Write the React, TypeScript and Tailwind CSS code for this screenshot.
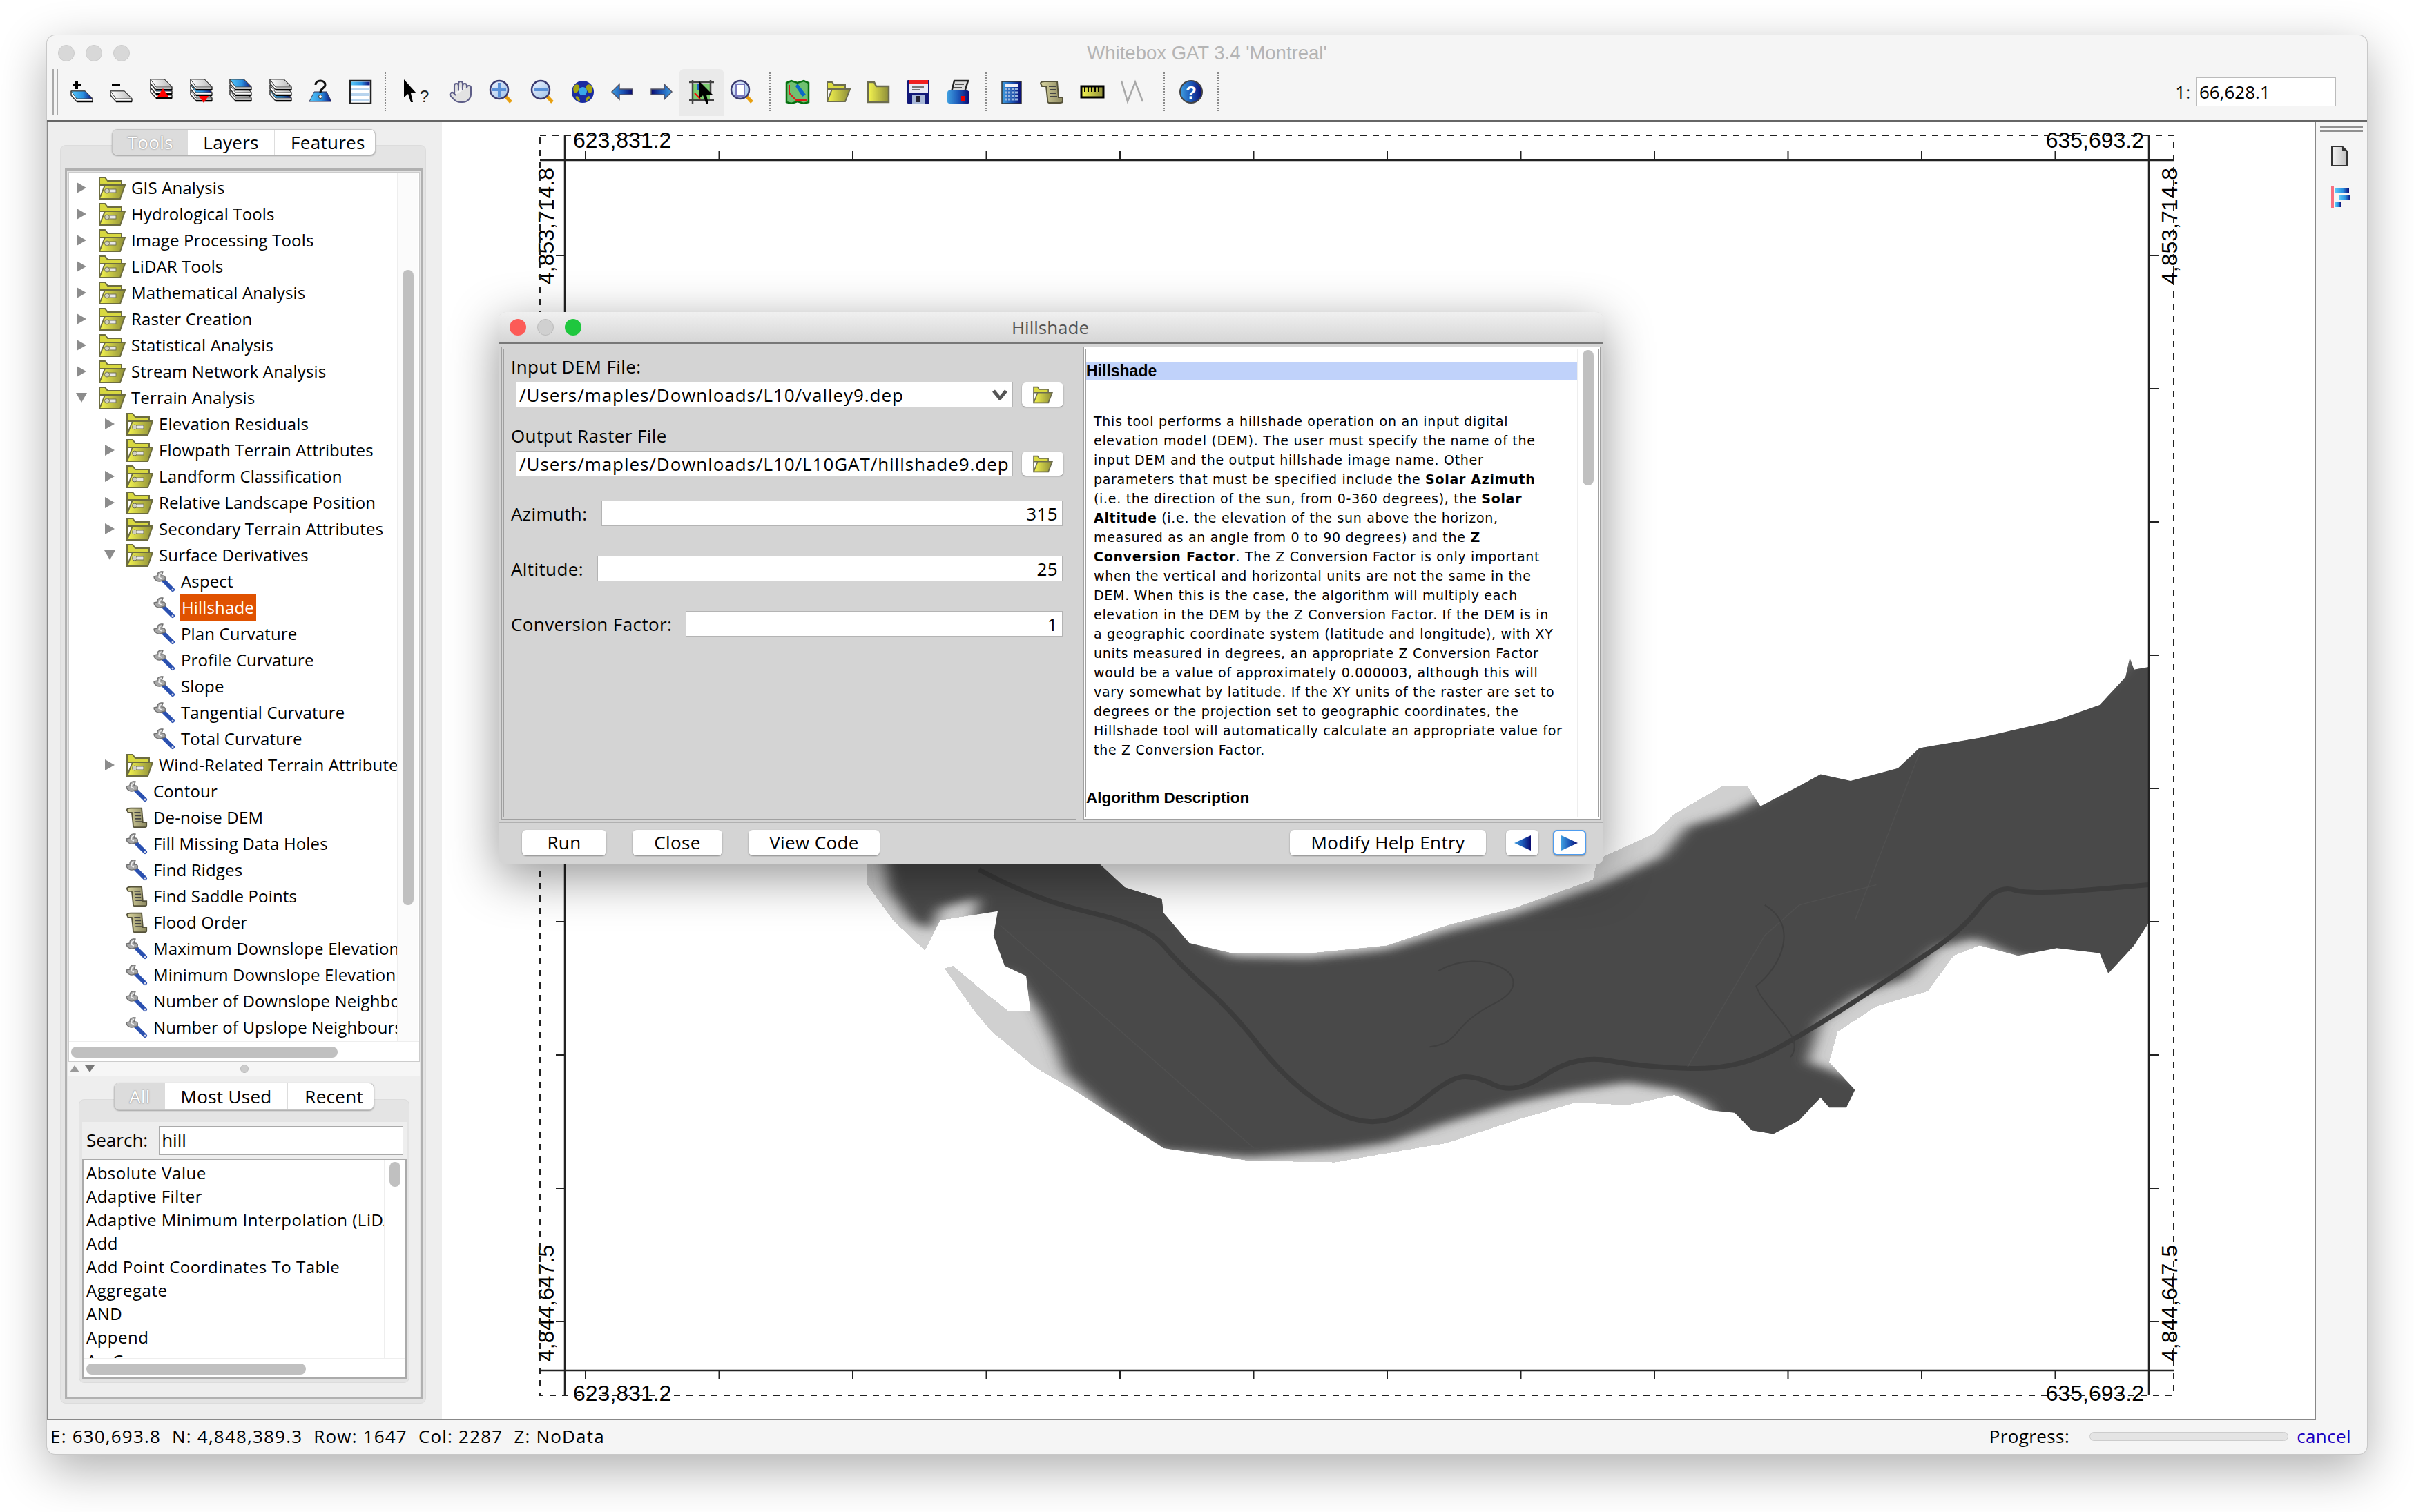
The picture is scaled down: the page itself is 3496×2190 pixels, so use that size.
import React from "react";
import { Hand } from "lucide-react";

const Defs = () => (
  <svg className="absolute w-0 h-0">
    <defs>
      <linearGradient id="gb"><stop offset="0" stopColor="#58c8f8" /><stop offset="0.55" stopColor="#2a90e0" /><stop offset="1" stopColor="#0c0c78" /></linearGradient>
      <linearGradient id="gy"><stop offset="0" stopColor="#f6f650" /><stop offset="1" stopColor="#8c8c38" /></linearGradient>
      <linearGradient id="gw"><stop offset="0" stopColor="#ffffff" /><stop offset="1" stopColor="#b8b8b8" /></linearGradient>
      <linearGradient id="gal"><stop offset="0" stopColor="#3f9fe0" /><stop offset="0.5" stopColor="#1c58b8" /><stop offset="1" stopColor="#0a0a70" /></linearGradient>
      <linearGradient id="gar"><stop offset="0" stopColor="#0a0a70" /><stop offset="0.5" stopColor="#1c58b8" /><stop offset="1" stopColor="#3f9fe0" /></linearGradient>
      <linearGradient id="gg" x1="0" y1="0" x2="1" y2="1"><stop offset="0" stopColor="#f0f4ff" /><stop offset="1" stopColor="#9cc0e8" /></linearGradient>
      <linearGradient id="gh"><stop offset="0" stopColor="#f4f4f4" /><stop offset="1" stopColor="#c0c0c0" /></linearGradient>
      <linearGradient id="gs"><stop offset="0" stopColor="#d8d4a0" /><stop offset="1" stopColor="#8c8860" /></linearGradient>
      <filter id="bl" x="-10%" y="-10%" width="120%" height="120%"><feGaussianBlur stdDeviation="9" /></filter>
    </defs>
  </svg>
);

const I = ({ children, w = 36, h = 36 }: { children: React.ReactNode; w?: number; h?: number }) => (
  <svg width={w} height={h} viewBox={`0 0 ${w} ${h}`} className="block shrink-0">{children}</svg>
);

const Layer = ({ y, x = 2, fill }: { y: number; x?: number; fill: string }) => (
  <g transform={`translate(${x} ${y})`}>
    <path d="M0 0H20L31 11V15H8L0 6Z" fill="#fff" stroke="#333" strokeWidth="1.5" strokeLinejoin="round" />
    <path d="M0 0H20L31 11H8Z" fill={fill} stroke="#444" strokeWidth="1" />
    <path d="M8 15H31" stroke="#000" strokeWidth="2.5" />
  </g>
);

const AddLayer = () => (<I><path d="M4 8H16M10 2V14" stroke="#000" strokeWidth="4" /><Layer y={17} fill="url(#gb)" /></I>);
const RemoveLayer = () => (<I><path d="M4 8H16" stroke="#000" strokeWidth="4" /><Layer y={17} fill="url(#gw)" /></I>);
const Raise = () => (<I><Layer y={12} x={2} fill="url(#gw)" /><Layer y={6} x={2} fill="url(#gb)" /><Layer y={0} x={2} fill="url(#gw)" /><path d="M12 25L20 13L28 25Z" fill="#f00" /></I>);
const Lower = () => (<I><Layer y={16} x={2} fill="url(#gw)" /><Layer y={8} x={2} fill="url(#gb)" /><Layer y={0} x={2} fill="url(#gw)" /><path d="M14 24H28L21 34Z" fill="#f00" /></I>);
const StackTop = () => (<I><Layer y={16} fill="url(#gw)" /><Layer y={8} fill="url(#gw)" /><Layer y={0} fill="url(#gb)" /></I>);
const StackBot = () => (<I><Layer y={16} fill="url(#gb)" /><Layer y={8} fill="url(#gw)" /><Layer y={0} fill="url(#gw)" /></I>);
const HookQ = () => (
  <I>
    <path d="M9 18H27L34 32H2Z" fill="url(#gb)" stroke="#335" strokeWidth="1" />
    <path d="M11 8C11 0 25 0 25 8C25 13 18 12 18 19" fill="none" stroke="#111" strokeWidth="3" />
    <circle cx="18" cy="25" r="2.5" fill="#fff" stroke="#333" />
  </I>
);
const TableI = () => (
  <I h={36}>
    <rect x="3" y="2" width="30" height="33" fill="#fff" stroke="#222" strokeWidth="2.5" />
    <rect x="4.5" y="3.5" width="27" height="5" fill="url(#gb)" />
    <rect x="4.5" y="12" width="27" height="4" fill="#b8d4ee" />
    <rect x="4.5" y="20" width="27" height="4" fill="#b8d4ee" />
    <rect x="4.5" y="28" width="27" height="4" fill="#b8d4ee" />
  </I>
);
const CursorQ = () => (
  <I w={40}>
    <path d="M2 0V26L8 21L12 33H15L12 20H20Z" fill="#000" />
    <text x="25" y="33" fontFamily="Liberation Sans" fontSize="24" fill="#222">?</text>
  </I>
);
const HandI = () => <Hand size={36} strokeWidth={1.4} color="#5e5e88" fill="#e2e2e2" className="block" />;
const Mag = ({ kind }: { kind: "+" | "-" | "o" }) => (
  <I>
    <path d="M24 24L32 33" stroke="#e8a010" strokeWidth="5" />
    <circle cx="15" cy="15" r="13" fill="url(#gg)" stroke="#3a3a70" strokeWidth="2.5" />
    {kind !== "o" && <path d="M5 15H25" stroke="#5a90d8" strokeWidth="4" />}
    {kind === "+" && <path d="M15 5V25" stroke="#5a90d8" strokeWidth="4" />}
    {kind === "o" && <rect x="9" y="7" width="12" height="17" fill="#fff" stroke="#7a7ac0" strokeWidth="2" />}
  </I>
);
const Globe = () => (
  <I>
    <circle cx="18" cy="18" r="16" fill="#1a2ca0" />
    <path d="M5 10C8 6 12 7 13 10C14 14 11 18 8 20C5 20 3 15 5 10Z" fill="#a4a410" />
    <path d="M31 10C28 6 24 7 23 10C22 14 25 18 28 20C31 20 33 15 31 10Z" fill="#a4a410" />
    <path d="M10 24C13 26 14 29 14 32C11 31 8 28 7 25Z" fill="#a4a410" />
    <path d="M26 24C23 26 22 29 22 32C25 31 28 28 29 25Z" fill="#a4a410" />
    <circle cx="18" cy="17" r="6" fill="#38a8e8" />
  </I>
);
const ArrowL = () => (<I><path d="M2 18L13 7V14H32V22H13V29Z" fill="url(#gal)" stroke="#556" strokeWidth="1.5" /></I>);
const ArrowR = () => (<I><path d="M34 18L23 7V14H4V22H23V29Z" fill="url(#gar)" stroke="#556" strokeWidth="1.5" /></I>);
const SelectI = () => (
  <I>
    <rect x="6" y="6" width="24" height="26" fill="#7ccc70" />
    <path d="M8 20L16 28" stroke="#f00" strokeWidth="2" />
    <rect x="11" y="6" width="6" height="10" fill="#1c60c0" />
    <path d="M5 1V35M0 4H36M0 30H36M31 1V20" stroke="#444" strokeWidth="2.5" fill="none" />
    <path d="M14 2V28L20 23L25 36H28L25 22H34Z" fill="#000" />
  </I>
);
const MapI = () => (
  <I>
    <path d="M2 5L9 2L18 5L27 2L34 5V33L27 35L18 32L9 35L2 33Z" fill="#70c070" stroke="#067010" strokeWidth="2.5" />
    <path d="M18 6L30 22L25 25L15 10Z" fill="#0a68c8" />
    <path d="M6 8V20L16 30H32" fill="none" stroke="#e01818" strokeWidth="2" />
  </I>
);
const FolderOpen = ({ w = 36, h = 32 }: { w?: number; h?: number }) => (
  <svg width={w} height={h} viewBox="0 0 36 32" className="block shrink-0">
    <path d="M2 2H9L12 6H28V12H2Z" fill="#dada40" stroke="#6c6c50" strokeWidth="2" />
    <path d="M2 12V30H28L35 12H9L2 30" fill="url(#gy)" stroke="#6c6c50" strokeWidth="2" />
  </svg>
);
const TreeFolder = () => (
  <svg width="40" height="36" viewBox="0 0 40 36" className="block shrink-0">
    <path d="M2 3H10L14 8H34V14H2Z" fill="#d8d840" stroke="#6c6c40" strokeWidth="2" />
    <path d="M2 14V34H32L39 14H10L2 34" fill="url(#gy)" stroke="#6c6c40" strokeWidth="2" />
    <rect x="12" y="20" width="14" height="5" fill="#e8e8e8" stroke="#707050" />
    <circle cx="13" cy="22.5" r="3.5" fill="#d0d0c0" stroke="#707050" />
  </svg>
);
const FolderI = () => (
  <I>
    <path d="M3 4H12L15 10H33V33H3Z" fill="url(#gy)" stroke="#6c6c50" strokeWidth="2.5" />
  </I>
);
const Save = () => (
  <I>
    <rect x="2" y="1" width="32" height="34" fill="#101878" rx="1" />
    <rect x="5" y="1" width="27" height="6" fill="#f02020" />
    <rect x="5" y="7" width="27" height="12" fill="#e8eaf4" />
    <path d="M9 11H26M9 15H20" stroke="#777" strokeWidth="2" />
    <rect x="9" y="22" width="19" height="13" fill="#a8b8d8" />
    <rect x="14" y="24" width="6" height="9" fill="#223" />
  </I>
);
const PrintI = () => (
  <I>
    <path d="M12 2H32L27 18H8Z" fill="#ddd" stroke="#222" strokeWidth="2.5" />
    <path d="M13 7H26M11 12H23" stroke="#555" strokeWidth="2" />
    <path d="M2 20C2 15 5 16 8 16H30C33 16 34 18 34 22V33C34 35 32 35 30 35H6C3 35 2 34 2 32Z" fill="url(#gal)" />
    <rect x="22" y="24" width="6" height="7" fill="#e80000" />
  </I>
);
const Calc = () => (
  <I>
    <rect x="4" y="3" width="28" height="32" fill="url(#gal)" stroke="#333" strokeWidth="1.5" />
    <rect x="8" y="6" width="20" height="5" fill="#f0f0f8" />
    <path d="M8 14H28M8 19H28M8 24H28M8 29H28" stroke="#9cb8e0" strokeWidth="3" />
    <path d="M12 13V31M17 13V31M22 13V31" stroke="#3468b8" strokeWidth="2" />
  </I>
);
const ScrollI = ({ s = 36 }: { s?: number }) => (
  <svg width={s} height={s} viewBox="0 0 36 36" className="block shrink-0">
    <path d="M2 6C2 3 6 3 8 3H26L28 26H34V32C34 34 32 34 30 34H14C12 34 12 30 12 28L10 10H4Z" fill="url(#gs)" stroke="#55523a" strokeWidth="2" />
    <path d="M14 10H24M15 15H25M15 20H25M16 25H26" stroke="#444" strokeWidth="2" />
  </svg>
);
const Ruler = () => (
  <I>
    <rect x="2" y="10" width="32" height="16" fill="url(#gy)" stroke="#000" strokeWidth="3" />
    <path d="M7 11V18M12 11V18M17 11V18M22 11V18M27 11V18" stroke="#000" strokeWidth="2" />
  </I>
);
const Zig = () => (
  <I w={40}><path d="M3 2L12 32L23 4L34 32" fill="none" stroke="#a8a8a8" strokeWidth="2.5" /></I>
);
const HelpI = () => (
  <I>
    <circle cx="18" cy="18" r="16" fill="url(#gal)" stroke="#444" strokeWidth="2" />
    <text x="18" y="28" fontFamily="Liberation Sans" fontWeight="700" fontSize="26" fill="#fff" textAnchor="middle">?</text>
  </I>
);
const Wrench = () => (
  <svg width="32" height="32" viewBox="0 0 32 32" className="block shrink-0">
    <path d="M15 15L28 28" stroke="#2a50b0" strokeWidth="6" strokeLinecap="round" />
    <circle cx="28" cy="28" r="1.5" fill="#dde" />
    <path d="M13 2C8 1 5 5 6 8L1 9C1 14 7 18 13 15L17 14C18 10 17 8 14 8L12 8L14 2Z" fill="#a8a8a8" stroke="#707070" strokeWidth="1.4" strokeLinejoin="round" />
    <path d="M12 4L9 6L8 10L12 12" fill="none" stroke="#eee" strokeWidth="1.5" />
  </svg>
);
const Tri = ({ open }: { open?: boolean }) => (
  <svg width="16" height="18" viewBox="0 0 16 18" className="block shrink-0">
    {open ? <path d="M0 2H16L8 16Z" fill="#8c8c8c" /> : <path d="M1 1L15 9L1 17Z" fill="#8c8c8c" />}
  </svg>
);
const DocI = () => (
  <svg width="24" height="30" viewBox="0 0 24 30" className="block">
    <path d="M1 1H16L23 8V29H1Z" fill="url(#gh)" stroke="#333" strokeWidth="2" />
    <path d="M16 1V8H23Z" fill="#333" />
  </svg>
);
const ChartI = () => (
  <svg width="30" height="32" viewBox="0 0 30 32" className="block">
    <rect x="0" y="0" width="4" height="32" fill="#f87080" />
    <rect x="6" y="3" width="20" height="7" fill="url(#gb)" />
    <rect x="12" y="13" width="16" height="7" fill="url(#gb)" />
    <rect x="6" y="24" width="8" height="7" fill="url(#gb)" />
  </svg>
);

const Sep = ({ ml }: { ml: string }) => <div className={`h-[56px] w-[2px] border-l-2 border-dotted border-[#8a8a8a] ${ml}`} />;
const TB = ({ w, children, sel }: { w: string; children: React.ReactNode; sel?: boolean }) => (
  <div className={`relative flex items-center justify-center shrink-0 h-[36px] ${w}`}>
    {sel && <div className="absolute left-[7.5px] right-[7.5px] -top-[15px] -bottom-[17px] rounded-t-[6px] bg-[#eaeaea]" />}
    <div className="relative">{children}</div>
  </div>
);

type Kind = "f0" | "f0o" | "f1" | "f1o" | "l1" | "l2" | "s1";
const rows: [string, Kind, boolean?][] = [
  ["GIS Analysis", "f0"], ["Hydrological Tools", "f0"], ["Image Processing Tools", "f0"], ["LiDAR Tools", "f0"],
  ["Mathematical Analysis", "f0"], ["Raster Creation", "f0"], ["Statistical Analysis", "f0"], ["Stream Network Analysis", "f0"],
  ["Terrain Analysis", "f0o"], ["Elevation Residuals", "f1"], ["Flowpath Terrain Attributes", "f1"], ["Landform Classification", "f1"],
  ["Relative Landscape Position", "f1"], ["Secondary Terrain Attributes", "f1"], ["Surface Derivatives", "f1o"],
  ["Aspect", "l2"], ["Hillshade", "l2", true], ["Plan Curvature", "l2"], ["Profile Curvature", "l2"], ["Slope", "l2"],
  ["Tangential Curvature", "l2"], ["Total Curvature", "l2"], ["Wind-Related Terrain Attributes", "f1"], ["Contour", "l1"],
  ["De-noise DEM", "s1"], ["Fill Missing Data Holes", "l1"], ["Find Ridges", "l1"], ["Find Saddle Points", "s1"], ["Flood Order", "s1"],
  ["Maximum Downslope Elevation Change", "l1"], ["Minimum Downslope Elevation Change", "l1"],
  ["Number of Downslope Neighbours", "l1"], ["Number of Upslope Neighbours", "l1"],
];

const Row = ({ label, kind, sel }: { label: string; kind: Kind; sel?: boolean }) => {
  const folder = kind[0] === "f";
  const lead = kind.startsWith("f0") ? "pl-[10px]" : kind.startsWith("f1") ? "pl-[51px]" : kind === "l2" ? "pl-[122px]" : "pl-[82px]";
  const arrowGap = kind.startsWith("f0") ? "mr-[16px]" : "mr-[15px]";
  return (
    <div className={`flex h-[38px] items-center whitespace-nowrap tracking-[0.15px] ${lead}`}>
      {folder && <div className={arrowGap}><Tri open={kind.endsWith("o")} /></div>}
      {folder ? <TreeFolder /> : kind === "s1" ? <ScrollI s={32} /> : <Wrench />}
      {sel ? (
        <span className="ml-[6px] flex h-[38px] items-center bg-[#e05200] px-[3px] text-white">{label}</span>
      ) : (
        <span className="ml-[8px]">{label}</span>
      )}
    </div>
  );
};

const Tabs = ({ items, widths, cls }: { items: string[]; widths: string[]; cls: string }) => (
  <div className={`relative z-10 flex rounded-[8px] border border-[#c4c4c4] bg-white text-[26px] tracking-[0.3px] shadow-[0_1px_2px_rgba(0,0,0,0.3)] overflow-hidden ${cls}`}>
    {items.map((t, i) => (
      <div key={t} className={`flex items-center justify-center ${widths[i]} ${i === 0 ? "bg-[#dcdcdc] text-white [text-shadow:0_0_2px_#777]" : "text-black"} ${i === 2 ? "border-l border-[#ddd] pl-[9px]" : ""}`}>{t}</div>
    ))}
  </div>
);

const listItems = ["Absolute Value", "Adaptive Filter", "Adaptive Minimum Interpolation (LiDAR)", "Add", "Add Point Coordinates To Table", "Aggregate", "AND", "Append", "ArcCos"];

const B = ({ children }: { children: React.ReactNode }) => <b className="font-bold">{children}</b>;
const help: React.ReactNode[] = [
  "This tool performs a hillshade operation on an input digital",
  "elevation model (DEM). The user must specify the name of the",
  "input DEM and the output hillshade image name. Other",
  <>parameters that must be specified include the <B>Solar Azimuth</B></>,
  <>(i.e. the direction of the sun, from 0-360 degrees), the <B>Solar</B></>,
  <><B>Altitude</B> (i.e. the elevation of the sun above the horizon,</>,
  <>measured as an angle from 0 to 90 degrees) and the <B>Z</B></>,
  <><B>Conversion Factor</B>. The Z Conversion Factor is only important</>,
  "when the vertical and horizontal units are not the same in the",
  "DEM. When this is the case, the algorithm will multiply each",
  "elevation in the DEM by the Z Conversion Factor. If the DEM is in",
  "a geographic coordinate system (latitude and longitude), with XY",
  "units measured in degrees, an appropriate Z Conversion Factor",
  "would be a value of approximately 0.000003, although this will",
  "vary somewhat by latitude. If the XY units of the raster are set to",
  "degrees or the projection set to geographic coordinates, the",
  "Hillshade tool will automatically calculate an appropriate value for",
  "the Z Conversion Factor.",
];

const outer = "45,470 310,470 345,525 388,548 390,575 420,635 470,655 560,655 650,640 720,600 800,565 890,510 895,470 960,420 985,380 1040,326 1070,326 1085,365 1130,325 1155,302 1190,315 1245,290 1270,250 1340,230 1430,195 1480,165 1510,110 1515,72 1520,95 1537,90 1537,595 1520,640 1490,695 1480,655 1430,645 1385,660 1340,640 1310,660 1280,730 1220,760 1175,810 1165,870 1195,925 1185,960 1165,960 1155,940 1130,985 1100,1012 1075,1005 1055,970 1025,965 985,935 930,955 870,950 800,985 720,1030 650,1050 590,1068 490,1065 390,1040 290,930 240,880 190,810 170,770 135,685 145,680 180,730 210,770 235,770 230,700 205,680 192,620 197,572 130,590 112,650 75,590 45,520";
const inner = "62,440 310,440 350,505 410,530 415,590 440,640 470,662 560,665 650,648 720,612 800,578 900,520 970,465 1000,405 1050,380 1085,350 1130,295 1155,272 1190,285 1245,260 1270,220 1340,200 1430,165 1480,135 1510,80 1515,40 1560,40 1560,620 1540,680 1490,730 1470,680 1430,665 1385,665 1335,625 1290,645 1255,705 1200,735 1155,790 1140,870 1230,925 1215,1000 1165,1000 1130,1020 1100,1040 1075,1040 1035,985 1020,950 985,925 930,910 870,925 800,950 720,990 650,1030 590,1045 490,1058 385,1045 320,960 275,890 262,830 245,770 215,700 180,680 165,620 175,545 130,565 118,610 95,590 70,530";

const smooth = (pts: number[][]) => {
  let d = `M${pts[0][0]} ${pts[0][1]}`;
  for (let i = 1; i < pts.length - 1; i++) {
    const mx = (pts[i][0] + pts[i + 1][0]) / 2;
    const my = (pts[i][1] + pts[i + 1][1]) / 2;
    d += `Q${pts[i][0]} ${pts[i][1]} ${mx} ${my}`;
  }
  const l = pts[pts.length - 1];
  return d + `L${l[0]} ${l[1]}`;
};
const river = smooth([[175, 490], [240, 550], [370, 600], [410, 680], [470, 770], [530, 900], [600, 985], [660, 990], [720, 905], [750, 895], [800, 935], [870, 855], [950, 880], [1060, 885], [1150, 800], [1240, 700], [1320, 610], [1360, 520], [1400, 540], [1537, 520]]);

const Terrain = () => (
  <g transform="translate(1200 900) scale(1.2438 0.7337)">
    <clipPath id="cp"><polygon points={outer} /></clipPath>
    <polygon points={outer} fill="#d0d0d0" shapeRendering="crispEdges" />
    <g clipPath="url(#cp)">
      <polygon points={inner} fill="#484848" filter="url(#bl)" />
      <path d={river} fill="none" stroke="#3c3c3c" strokeWidth="7" strokeLinejoin="round" vectorEffect="non-scaling-stroke" />
      <path d="M200 600L495 1040M1195 590L1270 260M1000 880L1090 620L1130 560L1220 520" fill="none" stroke="#505050" strokeWidth="1.5" vectorEffect="non-scaling-stroke" />
      <path d="M710 690C760 640 830 700 780 750C720 800 740 830 700 840M1090 560C1130 600 1110 680 1080 720C1090 770 1140 820 1120 860" fill="none" stroke="#3f3f3f" strokeWidth="2" vectorEffect="non-scaling-stroke" />
    </g>
  </g>
);

const hTicks = Array.from({ length: 12 }, (_, i) => 848 + 193.5 * i);
const vTicks = Array.from({ length: 9 }, (_, i) => 370 + 193 * i);

const MapCanvas = () => (
  <svg width="2712" height="1877" viewBox="640 178 2712 1877" className="block">
    <Terrain />
    <g fontFamily="Liberation Sans" fontSize="32" fill="#000">
      <text x="830" y="214">623,831.2</text>
      <text x="3105" y="214" textAnchor="end">635,693.2</text>
      <text x="830" y="2029">623,831.2</text>
      <text x="3105" y="2029" textAnchor="end">635,693.2</text>
      <text transform="translate(802 412) rotate(-90)">4,853,714.8</text>
      <text transform="translate(3153 412) rotate(-90)">4,853,714.8</text>
      <text transform="translate(802 1972) rotate(-90)">4,844,647.5</text>
      <text transform="translate(3153 1972) rotate(-90)">4,844,647.5</text>
    </g>
    <rect x="782" y="196" width="2366" height="1825" fill="none" stroke="#222" strokeWidth="2" strokeDasharray="9 9" />
    <path d="M782 232H3148M782 1985H3148M818 196V2021M3112 196V2021" stroke="#222" strokeWidth="2.5" fill="none" />
    {hTicks.map((x) => (<path key={x} d={`M${x} 219V232M${x} 1985V1998`} stroke="#222" strokeWidth="2" />))}
    {vTicks.map((y) => (<path key={y} d={`M805 ${y}H818M3112 ${y}H3126`} stroke="#222" strokeWidth="2" />))}
  </svg>
);

const Btn = ({ w, ml, children, focus }: { w: string; ml: string; children: React.ReactNode; focus?: boolean }) => (
  <div className={`flex h-[37px] items-center justify-center rounded-[6px] bg-white shadow-[0_1px_2px_rgba(0,0,0,0.35)] ${w} ${ml} ${focus ? "border-2 border-[#4d9cf0]" : ""}`}>{children}</div>
);
const Field = ({ w, ml, children, right }: { w: string; ml: string; children: React.ReactNode; right?: boolean }) => (
  <div className={`flex h-[37px] items-center border border-[#b4b4b4] bg-white whitespace-nowrap overflow-hidden ${w} ${ml} ${right ? "justify-end pr-[6px]" : "pl-[4px]"}`}>{children}</div>
);

const Dialog = () => (
  <div className="absolute left-[654px] top-[401px] z-20 flex h-[800px] w-[1600px] flex-col rounded-[10px] bg-[#d4d4d4] shadow-[0_18px_70px_rgba(0,0,0,0.42)] text-black">
    <div className="relative flex h-[46px] shrink-0 items-center rounded-t-[10px] border-b-2 border-[#777] bg-gradient-to-b from-[#f0f0f0] to-[#d6d6d6]">
      <div className="ml-[16px] h-[24px] w-[24px] rounded-full bg-[#fc5b57]" />
      <div className="ml-[16px] h-[24px] w-[24px] rounded-full bg-[#d0d0d0] border border-[#bbb]" />
      <div className="ml-[16px] h-[24px] w-[24px] rounded-full bg-[#1fc73e]" />
      <div className="absolute left-[0px] right-[2px] text-center text-[26px] text-[#555]">Hillshade</div>
    </div>
    <div className="flex h-[692px] shrink-0 pl-[4px] pt-[4px]">
      <div className="h-[685px] w-[833px] border-4 border-double border-[#a0a0a0] pl-[10px] pt-[11px] text-[26px] leading-[28px] tracking-[0.4px]">
        <div>Input DEM File:</div>
        <div className="mt-[8px] flex items-center">
          <div className="relative ml-[7px] flex h-[37px] w-[720px] items-center border border-[#b4b4b4] bg-white pl-[4px] tracking-[0.95px]">
            /Users/maples/Downloads/L10/valley9.dep
            <svg width="22" height="16" viewBox="0 0 22 16" className="absolute right-[7px] top-[10px]"><path d="M2 2L11 13L20 2" fill="none" stroke="#555" strokeWidth="5" /></svg>
          </div>
          <div className="ml-[13px] flex h-[35px] w-[60px] items-center justify-center rounded-[6px] bg-white shadow-[0_1px_2px_rgba(0,0,0,0.35)]"><FolderOpen w={40} h={26} /></div>
        </div>
        <div className="mt-[27px]">Output Raster File</div>
        <div className="mt-[8px] flex items-center">
          <Field w="w-[720px] tracking-[0.95px]" ml="ml-[7px]">/Users/maples/Downloads/L10/L10GAT/hillshade9.dep</Field>
          <div className="ml-[13px] flex h-[35px] w-[60px] items-center justify-center rounded-[6px] bg-white shadow-[0_1px_2px_rgba(0,0,0,0.35)]"><FolderOpen w={40} h={26} /></div>
        </div>
        <div className="mt-[35px] flex items-center"><span>Azimuth:</span><Field w="w-[668px]" ml="ml-auto mr-[16px]" right>315</Field></div>
        <div className="mt-[43px] flex items-center"><span>Altitude:</span><Field w="w-[674px]" ml="ml-auto mr-[16px]" right>25</Field></div>
        <div className="mt-[43px] flex items-center"><span>Conversion Factor:</span><Field w="w-[546px]" ml="ml-auto mr-[16px]" right>1</Field></div>
      </div>
      <div className="ml-[10px] flex h-[685px] w-[749px] border-4 border-double border-[#a0a0a0] bg-white">
        <div className="h-full w-[711px] shrink-0 overflow-hidden">
          <div className="mt-[18px] flex h-[26px] items-center bg-[#c0d2fa] font-['Liberation_Sans'] text-[23px] font-bold">Hillshade</div>
          <div className="mt-[46px] pl-[11px] font-['DejaVu_Sans'] text-[19px] leading-[28px] tracking-[0.7px] whitespace-nowrap">
            {help.map((l, i) => (<div key={i}>{l}</div>))}
          </div>
          <div className="mt-[42px] font-['Liberation_Sans'] text-[22.5px] font-bold leading-[28px]">Algorithm Description</div>
        </div>
        <div className="w-[30px] border-l border-[#eee] pl-[7px] pt-[1px]">
          <div className="h-[196px] w-[16px] rounded-full bg-[#c0c0c0]" />
        </div>
      </div>
    </div>
    <div className="flex h-[62px] shrink-0 border-t-2 border-[#b0b0b0] pt-[10px] text-[26px] tracking-[0.4px]">
      <Btn w="w-[122px]" ml="ml-[34px]">Run</Btn>
      <Btn w="w-[130px]" ml="ml-[38px]">Close</Btn>
      <Btn w="w-[190px]" ml="ml-[38px]">View Code</Btn>
      <Btn w="w-[284px]" ml="ml-[594px]">Modify Help Entry</Btn>
      <Btn w="w-[47px]" ml="ml-[29px]"><svg width="26" height="24" viewBox="0 0 26 24"><path d="M1 12L25 1V23Z" fill="url(#gal)" /></svg></Btn>
      <Btn w="w-[48px]" ml="ml-[21px]" focus><svg width="26" height="24" viewBox="0 0 26 24"><path d="M25 12L1 1V23Z" fill="url(#gal)" /></svg></Btn>
    </div>
  </div>
);

export default function App() {
  return (
    <div className="h-[2190px] w-[3496px] overflow-hidden bg-white pl-[68px] pt-[51px] font-['Open_Sans',sans-serif] text-[24px] text-black">
      <Defs />
      <div className="relative flex h-[2055px] w-[3360px] flex-col rounded-[12px] bg-[#f5f5f5] shadow-[0_0_0_1px_#c8c8c8,0_22px_70px_rgba(0,0,0,0.32)]">
        <div className="relative flex h-[50px] shrink-0 items-center pt-[2px]">
          <div className="ml-[16px] h-[24px] w-[24px] rounded-full bg-[#d8d8d8] border border-[#ccc]" />
          <div className="ml-[16px] h-[24px] w-[24px] rounded-full bg-[#d8d8d8] border border-[#ccc]" />
          <div className="ml-[16px] h-[24px] w-[24px] rounded-full bg-[#d8d8d8] border border-[#ccc]" />
          <div className="absolute inset-x-0 text-center font-['Liberation_Sans'] text-[27.5px] text-[#b4b4b4]">Whitebox GAT 3.4 &apos;Montreal&apos;</div>
        </div>
        <div className="flex h-[75px] shrink-0 items-center border-b-2 border-[#666] pb-[9px]">
          <div className="ml-[8px] h-[66px] w-[8px] shrink-0 border-x-2 border-[#aaa]" />
          <div className="ml-[6px] flex">
            {[<AddLayer />, <RemoveLayer />, <Raise />, <Lower />, <StackTop />, <StackBot />, <HookQ />, <TableI />].map((c, i) => (<TB key={i} w="w-[57.6px]">{c}</TB>))}
          </div>
          <Sep ml="ml-[6px]" />
          <div className="ml-[15px] flex">
            <TB w="w-[59px]"><CursorQ /></TB>
            <TB w="w-[69px]"><HandI /></TB>
            <TB w="w-[49px]"><Mag kind="+" /></TB>
            <TB w="w-[71px]"><Mag kind="-" /></TB>
            <TB w="w-[45px]"><Globe /></TB>
            <TB w="w-[71px]"><ArrowL /></TB>
            <TB w="w-[39px]"><ArrowR /></TB>
            <TB w="w-[79px]" sel><SelectI /></TB>
            <TB w="w-[39px]"><Mag kind="o" /></TB>
          </div>
          <Sep ml="ml-[19px]" />
          <div className="ml-[10.5px] flex">
            {[<MapI />, <FolderOpen h={36} />, <FolderI />, <Save />, <PrintI />].map((c, i) => (<TB key={i} w="w-[58.25px]">{c}</TB>))}
          </div>
          <Sep ml="ml-[9px]" />
          <div className="ml-[7px] flex">
            {[<Calc />, <ScrollI />, <Ruler />, <Zig />].map((c, i) => (<TB key={i} w="w-[58.6px]">{c}</TB>))}
          </div>
          <Sep ml="ml-[15px]" />
          <div className="ml-[9px]"><TB w="w-[58px]"><HelpI /></TB></div>
          <Sep ml="ml-[9px]" />
          <div className="ml-auto mr-[9px] text-[26px]">1:</div>
          <div className="mr-[45px] flex h-[42px] w-[202px] items-center border border-[#bbb] bg-white pl-[3px] text-[26px]">66,628.1</div>
        </div>

        <div className="flex h-[1881px] shrink-0">
          <div className="flex w-[1px] shrink-0 bg-[#888]" />
          <div className="h-full w-[571px] shrink-0 border-b-2 border-[#888] bg-[#eeeeee] pl-[18px] pt-[11px]">
            <Tabs items={["Tools", "Layers", "Features"]} widths={["w-[110px]", "w-[125px]", "w-[147px]"]} cls="ml-[75px] h-[38px] w-[382px]" />
            <div className="-mt-[15px] h-[1823px] w-[530px] rounded-[8px] border border-[#dcdcdc] bg-[#e4e4e4] pl-[6px] pt-[33px]">
              <div className="h-[1783px] w-[519px] border-[3px] border-[#b0b0b0] p-[2px]">
                <div className="h-[1289px] border border-[#ccc] bg-white">
                  <div className="flex h-[1258px]">
                    <div className="w-[475px] shrink-0 overflow-hidden pt-[3px]">
                      {rows.map(([l, k, s]) => (<Row key={l} label={l} kind={k} sel={s} />))}
                    </div>
                    <div className="w-[30px] border-l border-[#eee] bg-[#fbfbfb] pl-[7px] pt-[141px]">
                      <div className="h-[920px] w-[16px] rounded-full bg-[#c0c0c0]" />
                    </div>
                  </div>
                  <div className="h-[30px] border-t border-[#eee] pl-[3px] pt-[7px]">
                    <div className="h-[16px] w-[386px] rounded-full bg-[#c0c0c0]" />
                  </div>
                </div>
                <div className="flex h-[20px] items-center bg-[#f6f6f6] pl-[2px]">
                  <svg width="14" height="12" viewBox="0 0 14 12"><path d="M0 11H14L7 1Z" fill="#999" /></svg>
                  <svg width="14" height="12" viewBox="0 0 14 12" className="ml-[8px]"><path d="M0 1H14L7 11Z" fill="#777" /></svg>
                  <div className="ml-[211px] h-[12px] w-[12px] rounded-full border border-[#bbb] bg-[#ccc]" />
                </div>
                <div className="h-[465px] bg-[#eeeeee] pl-[15px] pt-[10px]">
                  <Tabs items={["All", "Most Used", "Recent"]} widths={["w-[73px]", "w-[178px]", "w-[125px]"]} cls="ml-[51px] h-[40px] w-[377px]" />
                  <div className="-mt-[16px] h-[411px] w-[479px] rounded-[8px] border border-[#dcdcdc] bg-[#e4e4e4] pl-[4px] pt-[32px]">
                    <div className="flex h-[53px] w-[470px] items-center bg-[#eeeeee] pl-[6px] text-[26px]">
                      <span>Search:</span>
                      <div className="ml-[16px] flex h-[42px] w-[354px] items-center border border-[#aaa] bg-white pl-[3px]">hill</div>
                    </div>
                    <div className="h-[319px] w-[470px] border-2 border-[#aaa] bg-white">
                      <div className="flex h-[287px]">
                        <div className="h-[287px] w-[435px] shrink-0 overflow-hidden whitespace-nowrap pl-[4px] pt-[2px] text-[24px] leading-[34px] tracking-[0.5px]">
                          {listItems.map((t) => (<div key={t}>{t}</div>))}
                        </div>
                        <div className="flex-1 border-l border-[#eee] pl-[7px] pt-[3px]">
                          <div className="h-[36px] w-[16px] rounded-full bg-[#c0c0c0]" />
                        </div>
                      </div>
                      <div className="h-[30px] border-t border-[#eee] pl-[4px] pt-[7px]">
                        <div className="h-[16px] w-[318px] rounded-full bg-[#c0c0c0]" />
                      </div>
                    </div>
                  </div>
                </div>
              </div>
            </div>
          </div>
          <div className="h-full w-[2714px] shrink-0 border-b-2 border-r-2 border-[#888] bg-white pt-[2px]">
            <MapCanvas />
          </div>
          <div className="flex-1 pl-[6px] pt-[7px]">
            <div className="h-[8px] w-[62px] border-y-2 border-[#909090]" />
            <div className="ml-[16px] mt-[20px]"><DocI /></div>
            <div className="ml-[16px] mt-[28px]"><ChartI /></div>
          </div>
        </div>

        <div className="flex flex-1 items-center pb-[2px] text-[26px]">
          <span className="ml-[5px] tracking-[1.2px]">E: 630,693.8</span>
          <span className="ml-[16px] tracking-[1.2px]">N: 4,848,389.3</span>
          <span className="ml-[16px] tracking-[1.2px]">Row: 1647</span>
          <span className="ml-[16px] tracking-[1.2px]">Col: 2287</span>
          <span className="ml-[16px] tracking-[1.2px]">Z: NoData</span>
          <span className="ml-auto tracking-[0.4px]">Progress:</span>
          <div className="ml-[29px] h-[13px] w-[288px] rounded-full border border-[#ccc] bg-[#e4e4e4]" />
          <span className="ml-[12px] mr-[23px] text-[#1a00c0] tracking-[0.4px]">cancel</span>
        </div>
        <Dialog />
      </div>
    </div>
  );
}
